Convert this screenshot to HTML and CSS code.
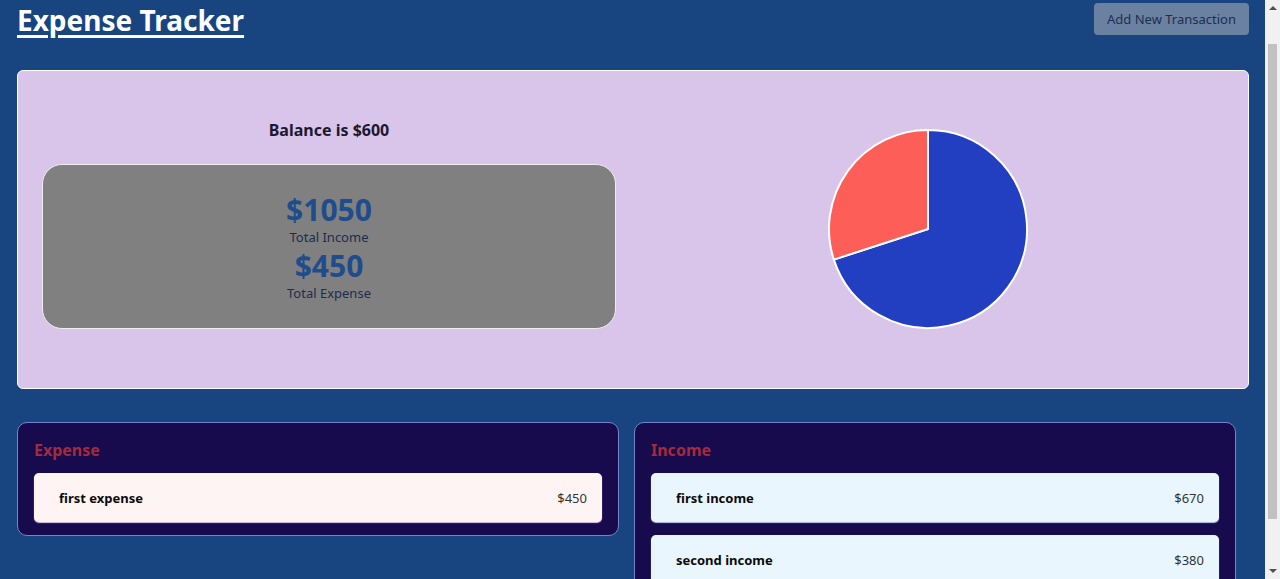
FILE: index.html
```html
<!DOCTYPE html>
<html lang="en">
<head>
<meta charset="utf-8">
<title>Expense Tracker</title>
<link rel="stylesheet" href="styles.css">
</head>
<body>
<div class="app">
  <header class="header">
    <h1 class="title">Expense Tracker</h1>
    <button class="add-btn">Add New Transaction</button>
  </header>

  <section class="summary">
    <div class="summary-left">
      <h2 class="balance">Balance is $600</h2>
      <div class="totals">
        <div class="amount">$1050</div>
        <div class="label">Total Income</div>
        <div class="amount">$450</div>
        <div class="label">Total Expense</div>
      </div>
    </div>
    <div class="summary-right">
      <svg class="pie" width="202" height="202" viewBox="0 0 202 202">
        <path d="M101 101 L101 2 A99 99 0 1 1 6.85 131.6 Z" fill="#233fc1" stroke="#ffffff" stroke-width="2" stroke-linejoin="round"/>
        <path d="M101 101 L6.85 131.6 A99 99 0 0 1 101 2 Z" fill="#fd5e57" stroke="#ffffff" stroke-width="2" stroke-linejoin="round"/>
      </svg>
    </div>
  </section>

  <section class="lists">
    <div class="panel">
      <h3 class="panel-title">Expense</h3>
      <div class="item item-expense">
        <span class="item-name">first expense</span>
        <span class="item-amount">$450</span>
      </div>
    </div>
    <div class="panel">
      <h3 class="panel-title">Income</h3>
      <div class="item item-income">
        <span class="item-name">first income</span>
        <span class="item-amount">$670</span>
      </div>
      <div class="item item-income">
        <span class="item-name">second income</span>
        <span class="item-amount">$380</span>
      </div>
    </div>
  </section>
</div>
<div class="scrollbar" aria-hidden="true">
  <span class="sb-arrow sb-up"></span>
  <span class="sb-thumb"></span>
  <span class="sb-arrow sb-down"></span>
</div>
</body>
</html>
```

FILE: styles.css
```css
html, body {
  margin: 0;
  padding: 0;
}

body {
  background: #18457f;
  font-family: "Noto Sans", "Open Sans", "Liberation Sans", sans-serif;
  color: #111;
}

.app {
  padding: 0 31px 70px 17px;
}

.header {
  display: flex;
  justify-content: space-between;
  align-items: flex-start;
  height: 40px;
  margin-bottom: 30px;
}

.title {
  margin: 0;
  font-size: 28px;
  line-height: 40px;
  font-weight: 700;
  color: #ffffff;
  text-decoration: underline;
  text-decoration-thickness: 3px;
  text-underline-offset: 4px;
}

.add-btn {
  margin-top: 3px;
  height: 32px;
  padding: 0 13px;
  background: #6b81a1;
  color: #1b2f50;
  border: none;
  border-radius: 4px;
  font-family: inherit;
  font-size: 13px;
  cursor: pointer;
}

.summary {
  display: grid;
  grid-template-columns: 574px 1fr;
  background: #d9c4ea;
  border: 1px solid #ffffff;
  border-radius: 6px;
  padding: 47px 24px 58px 24px;
}

.summary-left {
  display: flex;
  flex-direction: column;
  align-items: center;
}

.balance {
  margin: 0 0 22px 0;
  font-size: 16px;
  line-height: 24px;
  font-weight: 700;
  color: #1c1830;
}

.totals {
  box-sizing: border-box;
  width: 100%;
  height: 165px;
  background: #808080;
  border: 1px solid #eeeeee;
  border-radius: 20px;
  display: flex;
  flex-direction: column;
  align-items: center;
  justify-content: center;
  padding-top: 3px;
}

.amount {
  font-size: 30px;
  line-height: 36px;
  font-weight: 700;
  color: #1f4c8c;
}

.label {
  font-size: 13px;
  line-height: 18px;
  color: #1b2d4f;
  margin-bottom: 2px;
}

.summary-right {
  display: flex;
  justify-content: center;
  align-items: center;
  padding-left: 16px;
}

.pie {
  display: block;
  margin-top: 10px;
}

.lists {
  display: grid;
  grid-template-columns: 602px 602px;
  column-gap: 15px;
  align-items: start;
  margin-top: 33px;
}

.panel {
  background: #170a4d;
  border: 1px solid #7584c8;
  border-radius: 10px;
  padding: 15px 16px 0 16px;
}

.panel-title {
  margin: 0 0 11px 0;
  font-size: 16px;
  line-height: 24px;
  font-weight: 700;
  color: #a42b3d;
}

.item {
  display: flex;
  justify-content: space-between;
  align-items: center;
  height: 49px;
  box-sizing: border-box;
  padding: 0 15px 0 25px;
  border-radius: 5px;
  margin-bottom: 13px;
  font-size: 13px;
}

.item-expense {
  background: #fff4f4;
  box-shadow: 0 1px 1px #e7c9e6;
}

.item-income {
  background: #eaf6fd;
  box-shadow: 0 1px 1px #b9c6ee;
}

.item-name {
  font-weight: 700;
  color: #0a0a0a;
}

.item-amount {
  color: #333333;
}

/* imitation of the browser's vertical scrollbar */
.scrollbar {
  position: fixed;
  top: 0;
  right: 0;
  bottom: 0;
  width: 15px;
  background: #f1f1f1;
  display: flex;
  flex-direction: column;
  align-items: center;
}

.sb-arrow {
  flex: 0 0 15px;
  width: 0;
  height: 0;
  box-sizing: border-box;
}

.sb-up {
  flex-basis: auto;
  margin: 6px 0 4px;
  border-left: 4px solid transparent;
  border-right: 4px solid transparent;
  border-bottom: 4px solid #505050;
}

.sb-down {
  flex-basis: auto;
  margin: 4px 0 6px;
  border-left: 4px solid transparent;
  border-right: 4px solid transparent;
  border-top: 4px solid #505050;
}

.sb-thumb {
  flex: 0 0 475px;
  width: 9px;
  background: #c1c1c1;
  margin-top: 30px;
  margin-bottom: auto;
}
```
